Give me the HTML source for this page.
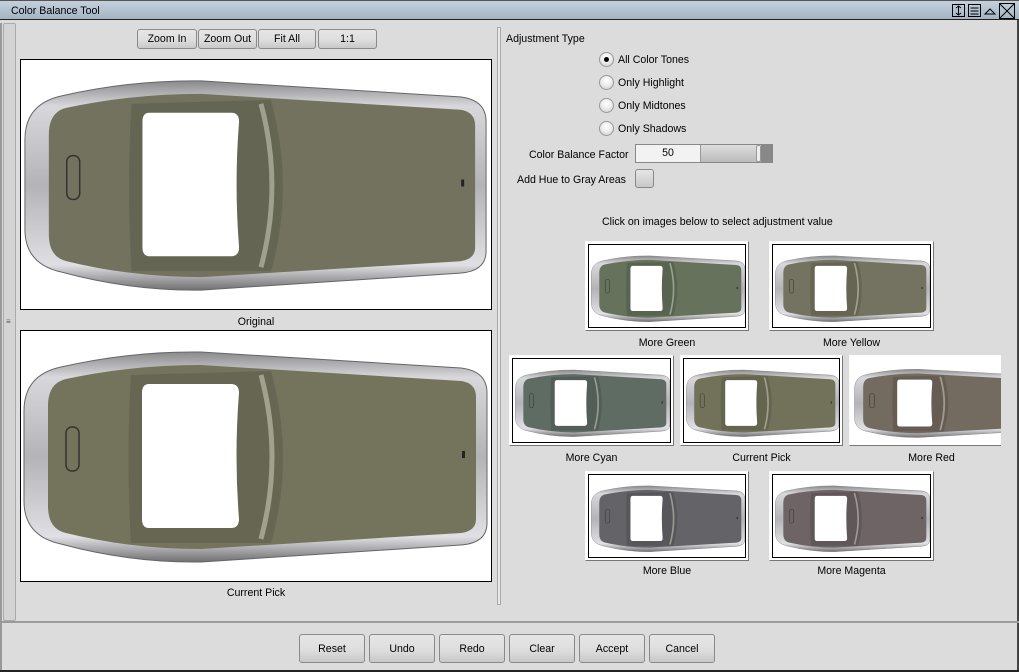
<!DOCTYPE html>
<html><head><meta charset="utf-8"><style>
*{margin:0;padding:0;box-sizing:border-box}
body{width:1019px;height:672px;background:#dcdcdc;font-family:"Liberation Sans","DejaVu Sans",sans-serif;font-size:10.6px;color:#000;position:relative;overflow:hidden}
.a{position:absolute}
.tb{left:0;top:0;width:1019px;height:20px;background:linear-gradient(#c4d0dc,#a4b4c4);border-bottom:1px solid #222;border-top:1px solid #555}
.btn{position:absolute;border:1px solid #8a8a8a;border-radius:3px;background:linear-gradient(#e6e6e6 0%,#dedede 55%,#c8c8c8 100%);text-align:center;font-size:10.6px}
.lbl{position:absolute;text-align:center;font-size:10.6px}
.img{position:absolute;background:#fff;border:1px solid #000}
.th{position:absolute;background:#fff;border:1px solid;border-color:#fafafa #777 #777 #fafafa;overflow:hidden}
.th .in{position:absolute;left:2px;top:2px;right:2px;bottom:2px;border:1px solid #000;overflow:hidden}
.rad{position:absolute;width:15px;height:15px;border-radius:50%;border:1px solid #999;background:radial-gradient(circle at 50% 35%,#fff 0%,#eee 45%,#c8c8c8 100%)}
.rt{position:absolute;font-size:10.6px}
</style></head><body>
<svg width="0" height="0" style="position:absolute">
<defs>
<linearGradient id="rim" x1="0" y1="0" x2="0" y2="1"><stop offset="0" stop-color="#8a8a8c"/><stop offset=".12" stop-color="#d8d8dc"/><stop offset=".5" stop-color="#b4b4b8"/><stop offset=".88" stop-color="#e0e0e4"/><stop offset="1" stop-color="#707072"/></linearGradient>
<symbol id="ph" viewBox="0 0 470 250">
<path d="M40,36 Q110,20 180,21 L440,37 Q466,40 466,62 L466,192 Q466,212 440,214 L180,231 Q110,232 40,213 Q3,205 3,170 L3,80 Q3,44 40,36Z" fill="url(#rim)" stroke="#666" stroke-width="1"/>
<path d="M45,48 Q110,34 180,34 L440,50 Q455,52 455,66 L455,188 Q455,200 440,202 L180,218 Q110,218 45,202 Q27,198 27,175 L27,75 Q27,52 45,48Z" fill="var(--c)"/>
<path d="M110,44 L250,40 Q262,85 262,126 Q262,170 250,212 L110,212 Q105,126 110,44Z" fill="var(--d)" opacity=".35"/>
<path d="M240,44 Q262,126 240,208" stroke="#e8e8d8" stroke-width="5" fill="none" opacity=".45"/>
<path d="M128,53 L210,53 Q218,53 218,62 Q213,125 218,188 Q218,197 210,197 L128,197 Q121,197 121,188 L121,62 Q121,53 128,53Z" fill="#fff"/>
<rect x="45" y="96" width="13" height="44" rx="6" fill="none" stroke="#333" stroke-width="1.5"/>
<rect x="441" y="120" width="3" height="7" fill="#222"/>
</symbol>
</defs></svg>

<div class="a tb"></div>
<div class="a" style="left:11px;top:5px;font-size:10.6px">Color Balance Tool</div>
<svg class="a" style="left:951px;top:3px" width="66" height="16" viewBox="0 0 66 16">
<rect x="1.5" y="1.5" width="12" height="12" fill="none" stroke="#000"/><path d="M7.5 3v9M5 5l2.5-2 2.5 2M5 10l2.5 2 2.5-2" stroke="#000" fill="none"/>
<rect x="17.5" y="1.5" width="12" height="12" fill="none" stroke="#000"/><path d="M19.5 5h8M19.5 8h8M19.5 11h8" stroke="#000"/>
<path d="M34 11l5-5 5 5z" fill="none" stroke="#000"/>
<rect x="48.5" y="0.5" width="15" height="15" fill="none" stroke="#000"/><path d="M49 1l14 14M63 1L49 15" stroke="#000"/>
</svg>

<div class="a" style="left:3px;top:23px;width:13px;height:598px;border:1px solid #aaa;background:#d4d4d4;border-radius:2px"></div>
<div class="a" style="left:6px;top:317px;font-size:8px;color:#555">≡</div>
<div class="a" style="left:0;top:23px;width:2px;height:648px;background:#999"></div>
<div class="a" style="left:1017px;top:20px;width:2px;height:652px;background:#444"></div>

<div class="btn" style="left:137px;top:29px;width:60px;height:20px;line-height:19px">Zoom In</div>
<div class="btn" style="left:198px;top:29px;width:59px;height:20px;line-height:19px">Zoom Out</div>
<div class="btn" style="left:258px;top:29px;width:58px;height:20px;line-height:19px">Fit All</div>
<div class="btn" style="left:318px;top:29px;width:59px;height:20px;line-height:19px">1:1</div>

<div class="img" style="left:20px;top:59px;width:472px;height:251px"><svg width="470" height="249" style="--c:#72725e;--d:#4e4e40"><use href="#ph"/></svg></div>
<div class="lbl" style="left:20px;top:316px;width:472px">Original</div>
<div class="img" style="left:20px;top:330px;width:472px;height:252px"><svg width="470" height="250" style="--c:#74735c;--d:#4e4e3e"><use href="#ph"/></svg></div>
<div class="lbl" style="left:20px;top:587px;width:472px">Current Pick</div>

<div class="a" style="left:497px;top:27px;width:4px;height:578px;border:1px solid #aaa;background:#e8e8e8"></div>
<div class="a" style="left:0;top:621px;width:1019px;height:2px;background:#9a9a9a"></div>
<div class="a" style="left:0;top:670px;width:1019px;height:2px;background:#222"></div>

<div class="rt" style="left:506px;top:33px">Adjustment Type</div>
<div class="rad" style="left:599px;top:52px"><div style="position:absolute;left:4px;top:4px;width:5px;height:5px;border-radius:50%;background:#000"></div></div>
<div class="rt" style="left:618px;top:54px">All Color Tones</div>
<div class="rad" style="left:599px;top:75px"></div><div class="rt" style="left:618px;top:77px">Only Highlight</div>
<div class="rad" style="left:599px;top:98px"></div><div class="rt" style="left:618px;top:100px">Only Midtones</div>
<div class="rad" style="left:599px;top:121px"></div><div class="rt" style="left:618px;top:123px">Only Shadows</div>
<div class="rt" style="left:529px;top:149px">Color Balance Factor</div>
<div class="a" style="left:635px;top:144px;width:138px;height:19px;border:1px solid #888;background:linear-gradient(#ddd,#bbb)">
<div style="position:absolute;left:0;top:0;width:65px;height:17px;background:#f2f2f2;border-right:1px solid #999;text-align:center;line-height:17px">50</div>
<div style="position:absolute;left:120px;top:0;width:5px;height:17px;background:#eee;border:1px solid #999;border-radius:2px"></div>
<div style="position:absolute;left:125px;top:0;width:11px;height:17px;background:#888"></div></div>
<div class="rt" style="left:517px;top:174px">Add Hue to Gray Areas</div>
<div class="a" style="left:635px;top:169px;width:19px;height:19px;border:1px solid #888;border-radius:3px;background:linear-gradient(#e6e6e6,#c8c8c8)"></div>

<div class="rt" style="left:602px;top:216px">Click on images below to select adjustment value</div>

<div class="th" style="left:585px;top:241px;width:164px;height:90px"><div class="in"><svg width="156" height="82" viewBox="-4 -8 478 266" preserveAspectRatio="none" style="--c:#66725c;--d:#3e4a38"><use href="#ph"/></svg></div></div>
<div class="lbl" style="left:585px;top:337px;width:164px">More Green</div>
<div class="th" style="left:769px;top:241px;width:165px;height:90px"><div class="in"><svg width="157" height="82" viewBox="-4 -8 478 266" preserveAspectRatio="none" style="--c:#747260;--d:#4c4a3c"><use href="#ph"/></svg></div></div>
<div class="lbl" style="left:769px;top:337px;width:165px">More Yellow</div>

<div class="th" style="left:509px;top:355px;width:165px;height:91px"><div class="in"><svg width="157" height="83" viewBox="-4 -8 478 266" preserveAspectRatio="none" style="--c:#5f6c64;--d:#3c4640"><use href="#ph"/></svg></div></div>
<div class="lbl" style="left:509px;top:452px;width:165px">More Cyan</div>
<div class="th" style="left:680px;top:355px;width:163px;height:91px"><div class="in"><svg width="155" height="83" viewBox="-4 -8 478 266" preserveAspectRatio="none" style="--c:#72725a;--d:#4c4a3a"><use href="#ph"/></svg></div></div>
<div class="lbl" style="left:680px;top:452px;width:163px">Current Pick</div>
<div class="th" style="left:849px;top:355px;width:152px;height:91px;border-right:none"><div class="in" style="right:-20px;border:none"><svg width="170" height="85" viewBox="-4 -8 478 266" preserveAspectRatio="none" style="--c:#736a60;--d:#4c423c"><use href="#ph"/></svg></div></div>
<div class="lbl" style="left:849px;top:452px;width:165px">More Red</div>

<div class="th" style="left:585px;top:471px;width:164px;height:90px"><div class="in"><svg width="156" height="82" viewBox="-4 -8 478 266" preserveAspectRatio="none" style="--c:#646468;--d:#404044"><use href="#ph"/></svg></div></div>
<div class="lbl" style="left:585px;top:565px;width:164px">More Blue</div>
<div class="th" style="left:769px;top:471px;width:165px;height:90px"><div class="in"><svg width="157" height="82" viewBox="-4 -8 478 266" preserveAspectRatio="none" style="--c:#6e6466;--d:#484042"><use href="#ph"/></svg></div></div>
<div class="lbl" style="left:769px;top:565px;width:165px">More Magenta</div>

<div class="btn" style="left:299px;top:634px;width:66px;height:29px;line-height:28px">Reset</div>
<div class="btn" style="left:369px;top:634px;width:66px;height:29px;line-height:28px">Undo</div>
<div class="btn" style="left:439px;top:634px;width:66px;height:29px;line-height:28px">Redo</div>
<div class="btn" style="left:509px;top:634px;width:66px;height:29px;line-height:28px">Clear</div>
<div class="btn" style="left:579px;top:634px;width:66px;height:29px;line-height:28px">Accept</div>
<div class="btn" style="left:649px;top:634px;width:66px;height:29px;line-height:28px">Cancel</div>
</body></html>
